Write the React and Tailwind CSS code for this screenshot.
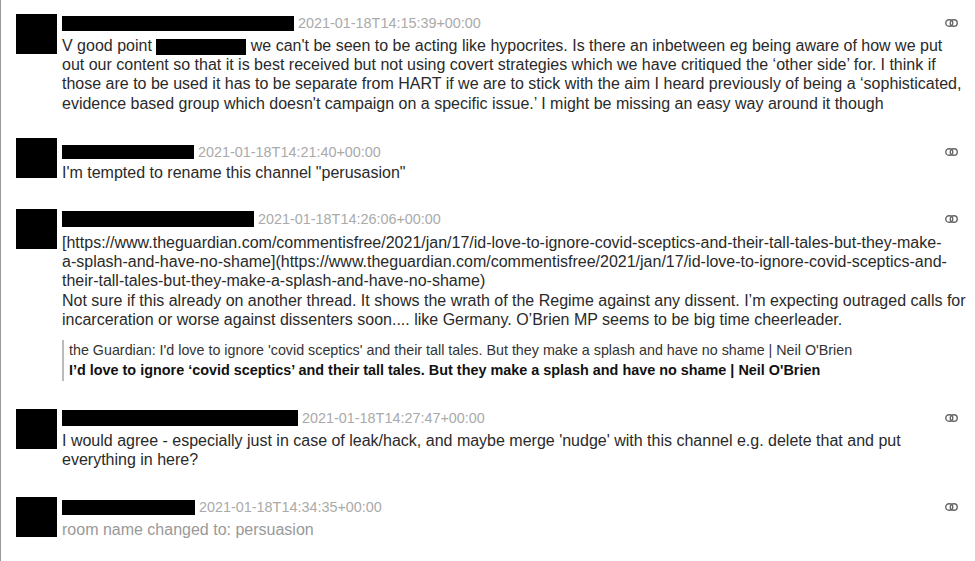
import React from 'react';

const LinkIcon = () => (
  <svg width="13" height="8" viewBox="0 0 13 8" className="shrink-0">
    <rect x="0.75" y="0.75" width="7" height="6.5" rx="3.25" fill="none" stroke="#666" strokeWidth="1.4" />
    <rect x="5.25" y="0.75" width="7" height="6.5" rx="3.25" fill="none" stroke="#666" strokeWidth="1.4" />
  </svg>
);

const Redacted = ({ w, h = 15 }) => (
  <span className="inline-block bg-black align-middle" style={{ width: w, height: h }} />
);

const Message = ({ mt, ht, bt, nameW, nameH, time, children, quote }) => (
  <div className="flex" style={{ marginTop: mt }}>
    <div className="w-[41px] h-[40px] bg-black shrink-0" />
    <div className="flex-1 min-w-0 ml-[5px] pr-[17px]">
      <div className="flex items-center justify-between h-[16px]" style={{ marginTop: ht }}>
        <div className="flex items-center">
          <Redacted w={nameW} h={nameH} />
          <span className="ml-[4px] text-[14.4px] leading-[16px] text-[#aaa]">{time}</span>
        </div>
        <LinkIcon />
      </div>
      <div className="text-[16px] leading-[19.2px] text-[#2a2a2a] whitespace-nowrap" style={{ marginTop: bt }}>
        {children}
      </div>
      {quote}
    </div>
  </div>
);

export default function App() {
  return (
    <div
      className="w-[975px] h-[561px] bg-white border-l border-[#999] pl-[15px] pt-[14px] overflow-hidden"
      style={{ fontFamily: '"Liberation Sans", Arial, sans-serif' }}
    >
      <Message mt={0} ht={1} bt={5} nameW={232} nameH={15} time="2021-01-18T14:15:39+00:00">
        V good point <Redacted w={90} h={16} /> we can't be seen to be acting like hypocrites. Is there an inbetween eg being aware of how we put
        <br />
        out our content so that it is best received but not using covert strategies which we have critiqued the ‘other side’ for. I think if
        <br />
        those are to be used it has to be separate from HART if we are to stick with the aim I heard previously of being a ‘sophisticated,
        <br />
        evidence based group which doesn't campaign on a specific issue.’ I might be missing an easy way around it though
      </Message>

      <Message mt={25} ht={6} bt={3} nameW={132} nameH={14} time="2021-01-18T14:21:40+00:00">
        I'm tempted to rename this channel "perusasion"
      </Message>

      <Message
        mt={27}
        ht={2}
        bt={6}
        nameW={192}
        nameH={16}
        time="2021-01-18T14:26:06+00:00"
        quote={
          <div className="mt-[11px] border-l-2 border-[#bbb] pl-[5px] py-[1px] leading-[19.5px] whitespace-nowrap">
            <div className="text-[#333] text-[14.3px]">
              the Guardian: I'd love to ignore 'covid sceptics' and their tall tales. But they make a splash and have no shame | Neil O'Brien
            </div>
            <div className="font-bold text-[#111] text-[14.4px]">
              I’d love to ignore ‘covid sceptics’ and their tall tales. But they make a splash and have no shame | Neil O'Brien
            </div>
          </div>
        }
      >
        [https://www.theguardian.com/commentisfree/2021/jan/17/id-love-to-ignore-covid-sceptics-and-their-tall-tales-but-they-make-
        <br />
        a-splash-and-have-no-shame](https://www.theguardian.com/commentisfree/2021/jan/17/id-love-to-ignore-covid-sceptics-and-
        <br />
        their-tall-tales-but-they-make-a-splash-and-have-no-shame)
        <br />
        Not sure if this already on another thread. It shows the wrath of the Regime against any dissent. I’m expecting outraged calls for
        <br />
        incarceration or worse against dissenters soon.... like Germany. O’Brien MP seems to be big time cheerleader.
      </Message>

      <Message mt={28} ht={1} bt={5} nameW={236} nameH={16} time="2021-01-18T14:27:47+00:00">
        I would agree - especially just in case of leak/hack, and maybe merge 'nudge' with this channel e.g. delete that and put
        <br />
        everything in here?
      </Message>

      <Message mt={28} ht={2} bt={5} nameW={133} nameH={15} time="2021-01-18T14:34:35+00:00">
        <span className="text-[#999]">room name changed to: persuasion</span>
      </Message>
    </div>
  );
}
